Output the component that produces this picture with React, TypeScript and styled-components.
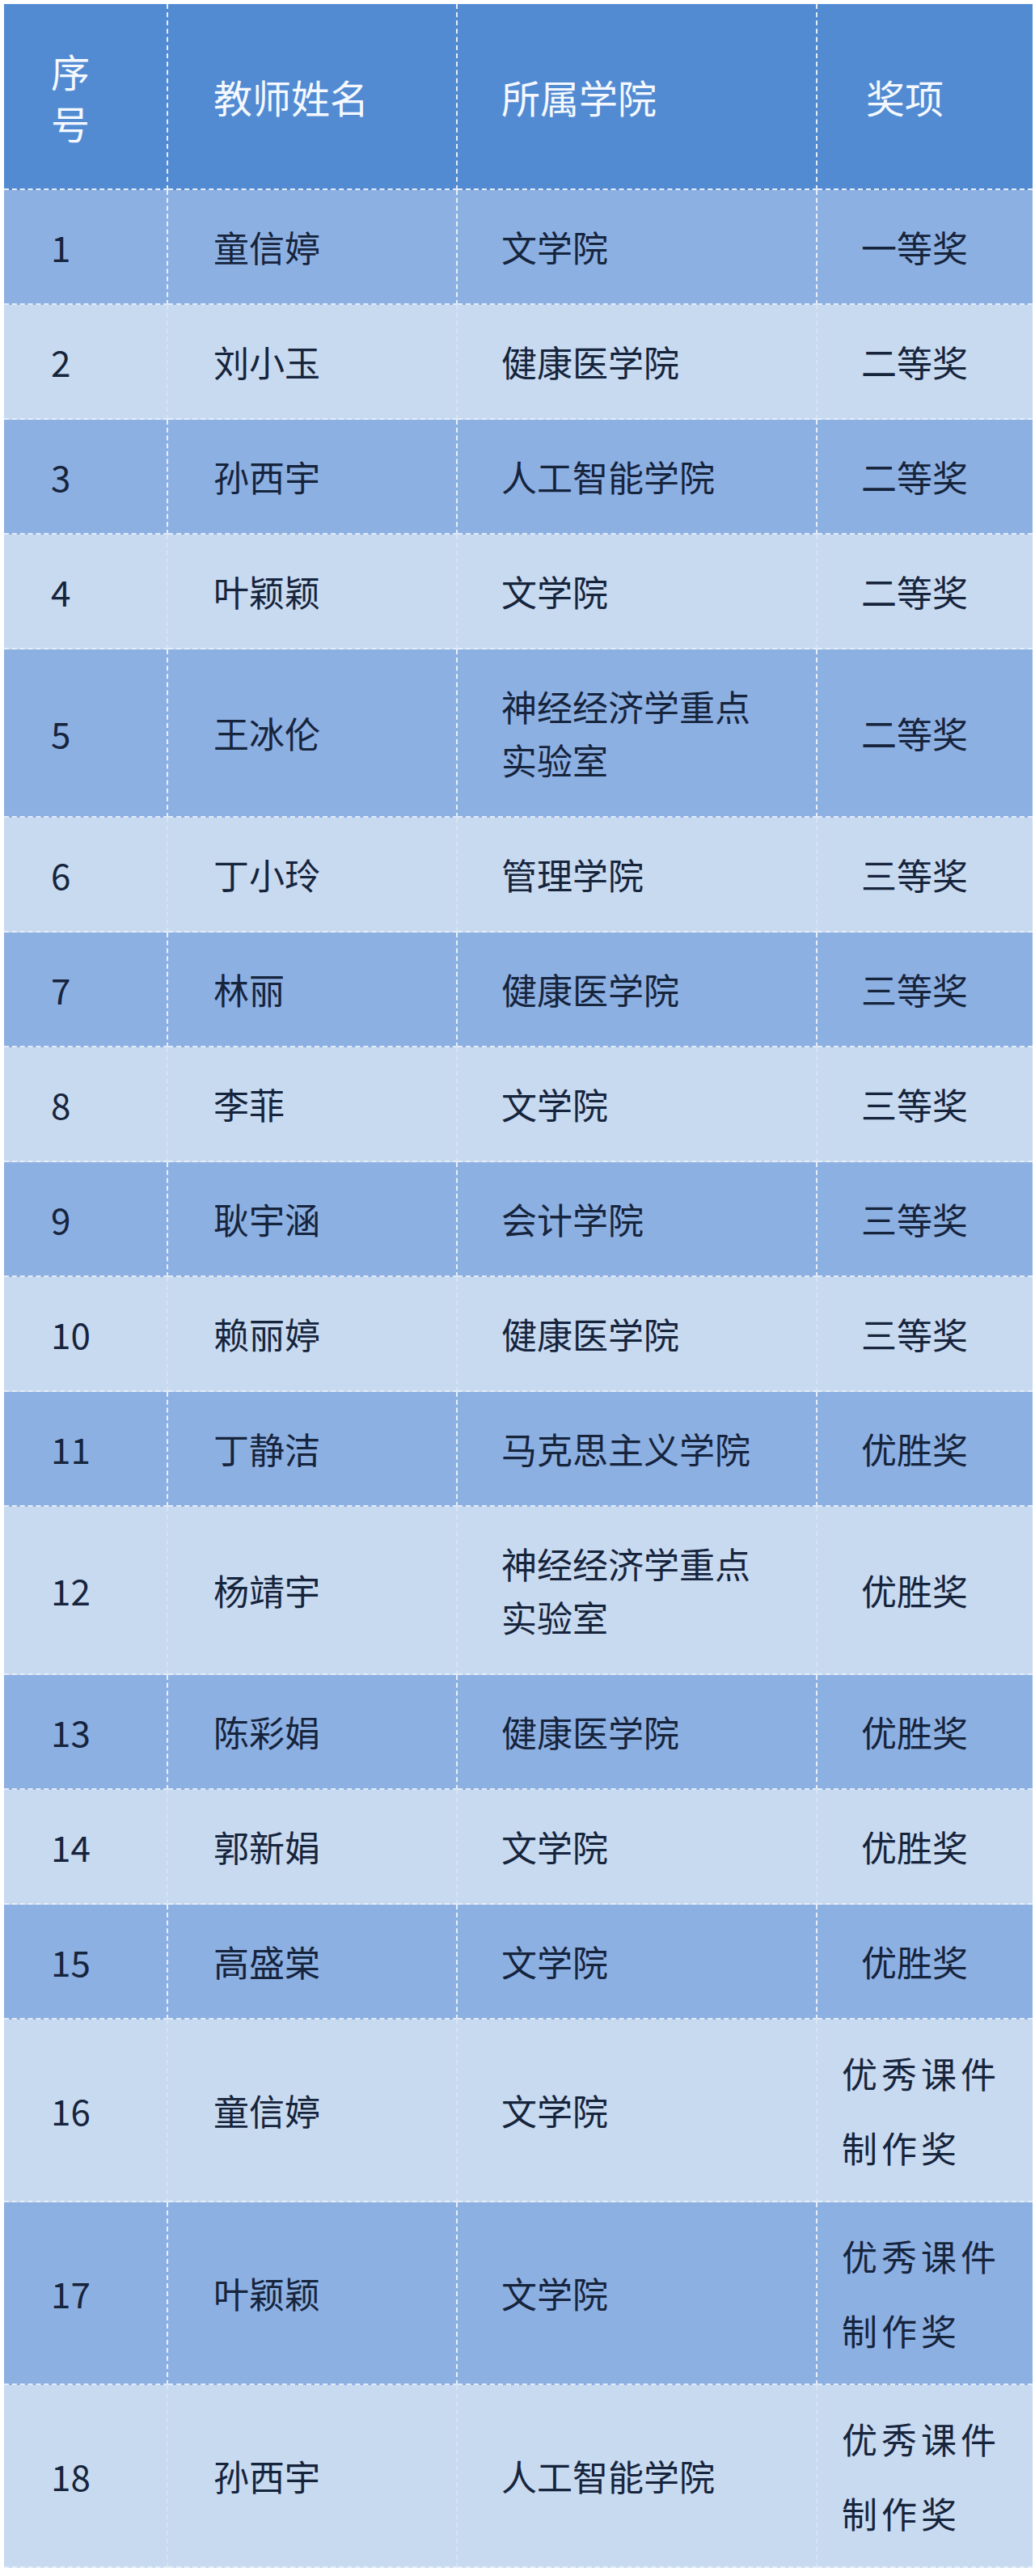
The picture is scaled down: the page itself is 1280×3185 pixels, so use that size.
import React from "react";
import styled, { createGlobalStyle, css } from "styled-components";

type Winner = {
    no: number;
    name: string;
    college: string;
    award: string;
    wide?: boolean;
};

const winners: Winner[] = [
    { no: 1, name: "童信婷", college: "文学院", award: "一等奖" },
    { no: 2, name: "刘小玉", college: "健康医学院", award: "二等奖" },
    { no: 3, name: "孙西宇", college: "人工智能学院", award: "二等奖" },
    { no: 4, name: "叶颖颖", college: "文学院", award: "二等奖" },
    { no: 5, name: "王冰伦", college: "神经经济学重点实验室", award: "二等奖" },
    { no: 6, name: "丁小玲", college: "管理学院", award: "三等奖" },
    { no: 7, name: "林丽", college: "健康医学院", award: "三等奖" },
    { no: 8, name: "李菲", college: "文学院", award: "三等奖" },
    { no: 9, name: "耿宇涵", college: "会计学院", award: "三等奖" },
    { no: 10, name: "赖丽婷", college: "健康医学院", award: "三等奖" },
    { no: 11, name: "丁静洁", college: "马克思主义学院", award: "优胜奖" },
    { no: 12, name: "杨靖宇", college: "神经经济学重点实验室", award: "优胜奖" },
    { no: 13, name: "陈彩娟", college: "健康医学院", award: "优胜奖" },
    { no: 14, name: "郭新娟", college: "文学院", award: "优胜奖" },
    { no: 15, name: "高盛棠", college: "文学院", award: "优胜奖" },
    { no: 16, name: "童信婷", college: "文学院", award: "优秀课件制作奖", wide: true },
    { no: 17, name: "叶颖颖", college: "文学院", award: "优秀课件制作奖", wide: true },
    { no: 18, name: "孙西宇", college: "人工智能学院", award: "优秀课件制作奖", wide: true },
];

type Col = "no" | "name" | "college" | "award";

const GlobalStyle = createGlobalStyle`
    * {
        box-sizing: border-box;
    }
    body {
        margin: 0;
        background: #ffffff;
        font-family: "Noto Sans CJK SC", "Noto Sans", sans-serif;
    }
`;

const App = () => {
    return (
        <>
            <GlobalStyle />
            <Page>
                <Table>
                    <thead>
                        <tr>
                            <HeadCell col="no">序号</HeadCell>
                            <HeadCell col="name">教师姓名</HeadCell>
                            <HeadCell col="college">所属学院</HeadCell>
                            <HeadCell col="award" last>奖项</HeadCell>
                        </tr>
                    </thead>
                    <tbody>
                        {winners.map((w) => (
                            <Row key={w.no} dark={w.no % 2 === 1}>
                                <Cell col="no" dark={w.no % 2 === 1}>{w.no}</Cell>
                                <Cell col="name" dark={w.no % 2 === 1}>{w.name}</Cell>
                                <Cell col="college" dark={w.no % 2 === 1}>{w.college}</Cell>
                                <Cell col="award" dark={w.no % 2 === 1} last wide={w.wide}>
                                    {w.award}
                                </Cell>
                            </Row>
                        ))}
                    </tbody>
                </Table>
            </Page>
        </>
    );
};

export default App;

const widths: Record<Col, number> = {
    no: 203,
    name: 358,
    college: 445,
    award: 266,
};

const pads: Record<Col, string> = {
    no: "0 56px 0 58px",
    name: "0 40px 0 56px",
    college: "0 54px 0 54px",
    award: "0 40px 0 14px",
};

const Page = styled.div`
    padding: 5px 3px 5px 5px;
`;

const Table = styled.table`
    width: 1272px;
    table-layout: fixed;
    border-collapse: separate;
    border-spacing: 0;
`;

const HeadCell = styled.th<{ col: Col; last?: boolean }>`
    width: ${(p) => widths[p.col]}px;
    height: 230px;
    padding: ${(p) => (p.col === "award" ? "0 52px 0 2px" : pads[p.col])};
    background: #528bd2;
    color: #f5f9ff;
    font-size: 48px;
    font-weight: 400;
    line-height: 64px;
    text-align: ${(p) => (p.col === "award" ? "center" : "left")};
    vertical-align: middle;
    border-bottom: 2px dashed rgba(255, 255, 255, 0.85);
    border-right: ${(p) => (p.last ? "none" : "2px dashed rgba(255, 255, 255, 0.85)")};
`;

const Row = styled.tr<{ dark: boolean }>`
    background: ${(p) => (p.dark ? "#8db0e3" : "#c8daf0")};
`;

const Cell = styled.td<{ col: Col; dark: boolean; last?: boolean; wide?: boolean }>`
    padding: ${(p) => pads[p.col]};
    padding-top: 37px;
    padding-bottom: 37px;
    color: #16243c;
    font-size: 44px;
    line-height: 66px;
    text-align: ${(p) => (p.col === "award" ? "center" : "left")};
    vertical-align: middle;
    border-bottom: 2px dashed rgba(255, 255, 255, ${(p) => (p.dark ? 0.75 : 0.55)});
    border-right: ${(p) =>
        p.last
            ? "none"
            : `2px dashed rgba(255, 255, 255, ${p.dark ? 0.8 : 0.25})`};
    ${(p) =>
        p.wide &&
        css`
            padding: 20px 10px 20px 30px;
            line-height: 92px;
            letter-spacing: 5px;
            text-align: left;
        `}
`;
